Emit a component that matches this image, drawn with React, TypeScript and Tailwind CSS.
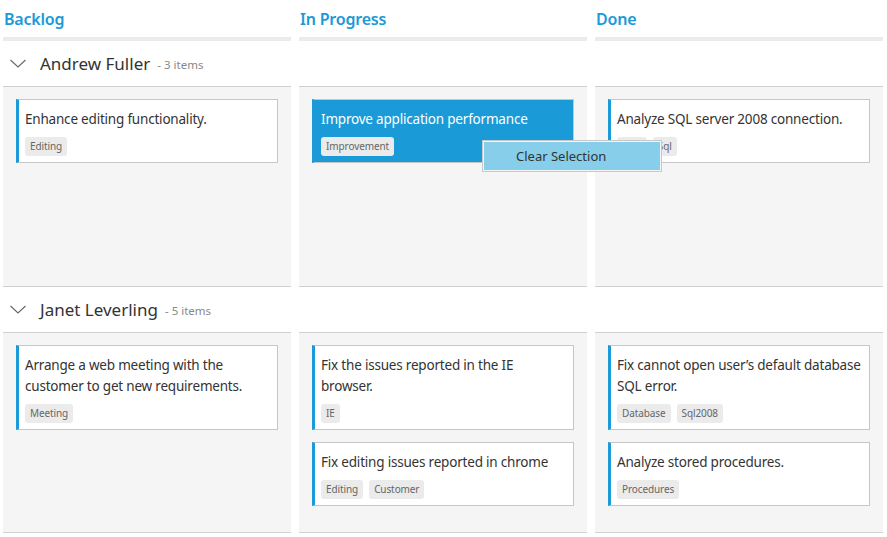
type Card = {
  title: string;
  tags: string[];
  selected?: boolean;
};

type Lane = {
  name: string;
  count: number;
  cells: Card[][];
};

const COLUMNS = ["Backlog", "In Progress", "Done"];

const LANES: Lane[] = [
  {
    name: "Andrew Fuller",
    count: 3,
    cells: [
      [{ title: "Enhance editing functionality.", tags: ["Editing"] }],
      [{ title: "Improve application performance", tags: ["Improvement"], selected: true }],
      [{ title: "Analyze SQL server 2008 connection.", tags: ["Grid", "Sql"] }],
    ],
  },
  {
    name: "Janet Leverling",
    count: 5,
    cells: [
      [{ title: "Arrange a web meeting with the customer to get new requirements.", tags: ["Meeting"] }],
      [
        { title: "Fix the issues reported in the IE browser.", tags: ["IE"] },
        { title: "Fix editing issues reported in chrome", tags: ["Editing", "Customer"] },
      ],
      [
        { title: "Fix cannot open user’s default database SQL error.", tags: ["Database", "Sql2008"] },
        { title: "Analyze stored procedures.", tags: ["Procedures"] },
      ],
    ],
  },
];

function KanbanCard({ card }: { card: Card }) {
  return (
    <div
      className={
        card.selected
          ? "border border-[#c6c6c6] border-l-[3px] border-l-[#1a9ad6] bg-[#1a9ad6] pb-[6px] pl-[6px] pr-2 pt-[9px]"
          : "border border-[#c6c6c6] border-l-[3px] border-l-[#1a9ad6] bg-white pb-[6px] pl-[6px] pr-2 pt-[9px]"
      }
    >
      <div
        className={
          card.selected
            ? "text-[13.5px] leading-[21px] tracking-[-0.2px] text-white"
            : "text-[13.5px] leading-[21px] tracking-[-0.2px] text-[#333]"
        }
      >
        {card.title}
      </div>
      <div className="mt-[7px] flex gap-[6px]">
        {card.tags.map((tag) => (
          <span
            key={tag}
            className="rounded-[3px] bg-[#ebebeb] px-[5px] text-[10px] leading-[19px] tracking-[-0.1px] text-[#666]"
          >
            {tag}
          </span>
        ))}
      </div>
    </div>
  );
}

export default function App() {
  return (
    <div className="relative h-[537px] w-[887px] overflow-hidden bg-white pl-[3px] font-['Noto_Sans',sans-serif]">
      <div className="grid grid-cols-[288px_288px_288px] gap-x-2">
        {COLUMNS.map((col) => (
          <div key={col} className="flex h-[41px] flex-col">
            <div className="flex h-[37px] items-center pl-px text-[16px] font-semibold tracking-[-0.2px] text-[#1a9ad6]">
              {col}
            </div>
            <div className="h-1 bg-[#ebebeb]" />
          </div>
        ))}

        {LANES.map((lane) => (
          <div key={lane.name} className="col-span-3 grid grid-cols-subgrid">
            <div className="col-span-3 flex h-[45px] items-center">
              <svg width="16" height="9" viewBox="0 0 16 9" className="ml-[7px]" fill="none">
                <polyline points="0.5,1 8,8 15.5,1" stroke="#666" strokeWidth="1.1" />
              </svg>
              <span className="ml-[14px] text-[17px] text-[#333]">{lane.name}</span>
              <span className="ml-[7px] mt-[3px] text-[11.5px] text-[#888]">- {lane.count} items</span>
            </div>
            {lane.cells.map((cards, i) => (
              <div
                key={i}
                className="flex h-[201px] flex-col gap-3 border-y border-[#d0d0d0] bg-[#f5f5f5] px-[13px] pt-3"
              >
                {cards.map((card) => (
                  <KanbanCard key={card.title} card={card} />
                ))}
              </div>
            ))}
          </div>
        ))}
      </div>

      {/* context menu */}
      <div className="absolute left-[482px] top-[140px] flex h-[32px] w-[180px] items-center border border-[#c8c8c8] bg-[#87ceeb] pl-[33px] pt-[2px] text-[13px] text-[#333] shadow-[inset_0_0_0_1px_#f4f4f4]">
        Clear Selection
      </div>
    </div>
  );
}
